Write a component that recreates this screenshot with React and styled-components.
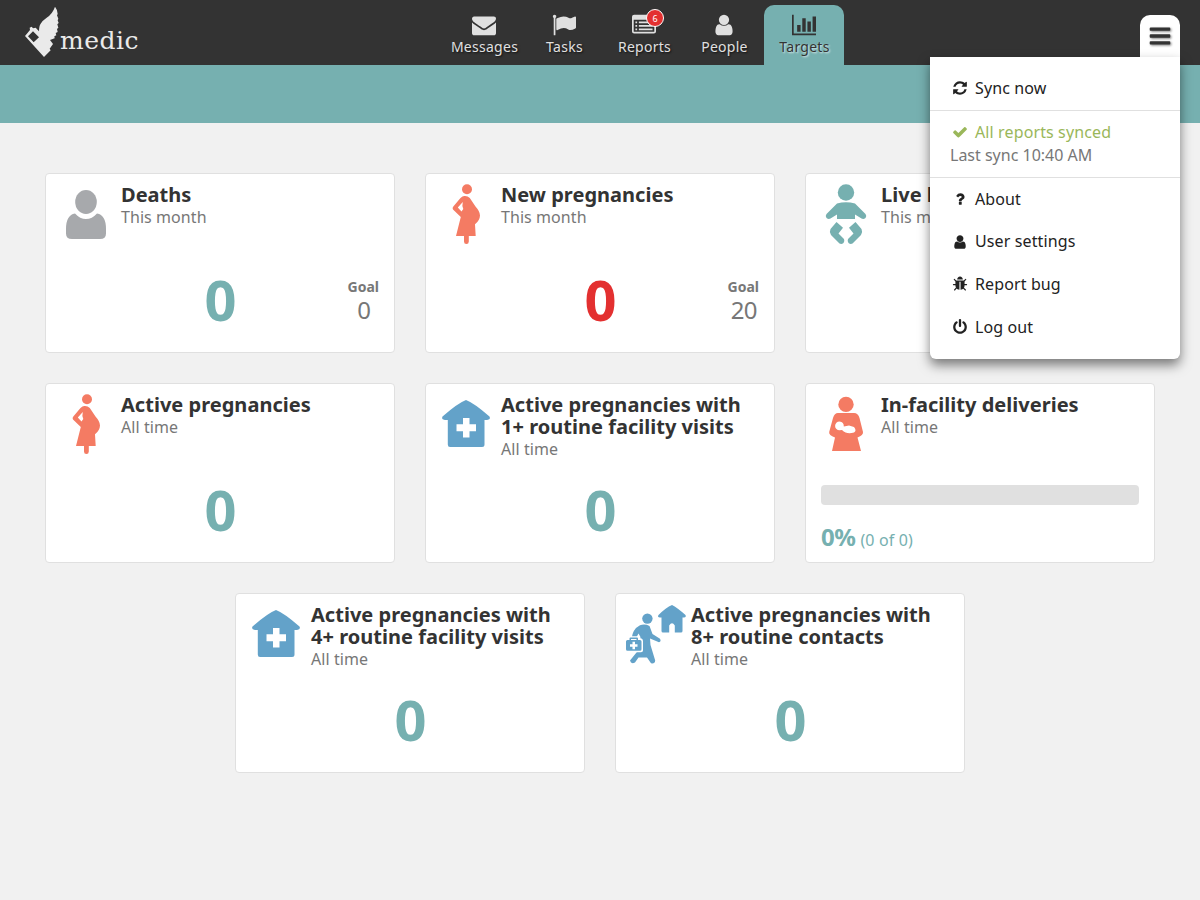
import React from 'react';
import styled, { createGlobalStyle, css } from 'styled-components';

const teal = '#76b0b0';
const red = '#e33030';

const GlobalStyle = createGlobalStyle`
  * { box-sizing: border-box; }
  body {
    margin: 0;
    background: #f1f1f1;
    color: #333;
    font-family: 'Noto Sans', sans-serif;
    font-size: 16px;
  }
`;

const Page = styled.div`
  position: relative;
  height: 900px;
  overflow: hidden;
`;

const Header = styled.header`
  display: flex;
  height: 65px;
  padding: 0 20px 0 24px;
  background: #333;
`;

const Brand = styled.div`
  display: flex;
  width: 420px;
  padding-top: 6px;
  color: #eaeaea;
`;

const BrandMark = styled.svg`
  width: 36px;
  height: 52px;
  flex: none;
  fill: currentColor;
`;

const BrandName = styled.span`
  font: 25px/30px 'DejaVu Serif', serif;
  letter-spacing: 0.5px;
  padding-top: 20px;
`;

const Nav = styled.nav`
  display: flex;
  align-items: flex-end;
`;

const Tab = styled.a`
  display: flex;
  flex-direction: column;
  align-items: center;
  width: 80px;
  height: 60px;
  padding-top: 8px;
  border-radius: 10px 10px 0 0;
  font-size: 14px;
  line-height: 20px;
  color: #e0e0e0;
  text-shadow: 1px 1px 2px rgba(0, 0, 0, 0.7);
  ${(p) => p.$active && css`
    background: ${teal};
    color: #333;
    text-shadow: 1px 1px 2px rgba(255, 255, 255, 0.8);
  `}
`;

const TabLabel = styled.span`
  padding-left: 1px;
  letter-spacing: 0.27px;
`;

const TabIcon = styled.span`
  position: relative;
  display: block;
  height: 24px;
`;

const Badge = styled.span`
  position: absolute;
  top: -4px;
  left: 14px;
  width: 18px;
  height: 18px;
  border: 1px solid #fff;
  border-radius: 50%;
  background: ${red};
  color: #fff;
  font-size: 9px;
  line-height: 17px;
  text-align: center;
  text-shadow: none;
`;

const Glyph = styled.svg`
  display: block;
  flex: none;
  width: ${(p) => p.$size}px;
  height: ${(p) => p.$size}px;
  fill: currentColor;
  overflow: hidden;
`;

const MenuButton = styled.button`
  display: flex;
  justify-content: center;
  width: 40px;
  height: 50px;
  margin: 15px 0 0 auto;
  padding: 8.500px 0 0;
  border: 0;
  border-radius: 10px 10px 0 0;
  background: #fff;
  color: #333;
  svg { filter: drop-shadow(1px 1px 1px rgba(0, 0, 0, 0.5)); }
`;

const Strip = styled.div`
  height: 58px;
  background: ${teal};
`;

const Menu = styled.div`
  position: absolute;
  top: 57px;
  right: 20px;
  width: 250px;
  padding: 10px 0;
  border-radius: 0 0 6px 6px;
  background: #fff;
  box-shadow: 0 6px 12px rgba(0, 0, 0, 0.5);
  line-height: 22.85px;
  color: #222;
`;

const MenuSection = styled.div`
  & + & { border-top: 1px solid #e0e0e0; }
`;

const MenuItem = styled.div`
  padding: 10px 20px;
`;

const MenuLine = styled.div`
  display: flex;
  align-items: center;
  gap: 7px;
  padding-left: 2px;
  letter-spacing: 0.12px;
  color: ${(p) => (p.$ok ? '#9ab75a' : 'inherit')};
  svg { margin-top: -0.5px; }
`;

const LastSync = styled.div`
  color: #777;
`;

const Cards = styled.main`
  display: flex;
  flex-wrap: wrap;
  justify-content: center;
  gap: 30px;
  padding: 50px 45px;
`;

const Card = styled.section`
  width: 350px;
  height: 180px;
  padding: 10px;
  border: 1px solid #e0e0e0;
  border-radius: 4px;
  background: #fff;
`;

const CardHead = styled.div`
  display: flex;
  gap: 5px;
  height: 80px;
`;

const CardIcon = styled.svg`
  flex: none;
  width: 60px;
  height: 60px;
  overflow: visible;
  fill: ${(p) => p.$color};
`;

const Title = styled.h2`
  margin: 0;
  font-size: 20px;
  line-height: 22px;
  font-weight: 700;
  letter-spacing: 0.02px;
  white-space: pre-line;
`;

const Period = styled.p`
  margin: 0;
  line-height: 22px;
  letter-spacing: 0.07px;
  color: #777;
`;

const Result = styled.div`
  display: grid;
  grid-template-columns: 1fr auto 1fr;
  align-items: center;
  height: 70px;
  padding: 0 5px;
`;

const Count = styled.span`
  grid-column: 2;
  padding-left: 1px;
  font-size: 56px;
  line-height: 70px;
  font-weight: 700;
  color: ${(p) => (p.$missed ? red : teal)};
`;

const Goal = styled.div`
  justify-self: end;
  padding-top: 2px;
  text-align: center;
  color: #777;
`;

const GoalLabel = styled.div`
  font-size: 14px;
  line-height: 20px;
  font-weight: 700;
`;

const GoalValue = styled.div`
  font-size: 24px;
  line-height: 26px;
  padding-left: 1px;
  letter-spacing: -0.8px;
`;

const Progress = styled.div`
  padding: 11px 5px 0;
`;

const Track = styled.div`
  height: 20px;
  border-radius: 4px;
  background: #e0e0e0;
`;

const Percent = styled.div`
  padding-top: 15px;
  line-height: 34px;
  letter-spacing: 0.15px;
  color: ${teal};
  strong {
    margin-right: 5px;
    font-size: 24px;
    letter-spacing: -0.5px;
  }
`;

const userPath = 'M1536 1399q0 109-62.5 187t-150.5 78h-854q-88 0-150.5-78t-62.5-187q0-85 8.5-160.5t31.5-152 58.5-131 94-89 134.5-34.5q131 128 313 128t313-128q76 0 134.5 34.5t94 89 58.5 131 31.5 152 8.5 160.5zm-256-887q0 159-112.5 271.5t-271.5 112.5-271.5-112.5-112.5-271.5 112.5-271.5 271.5-112.5 271.5 112.5 112.5 271.5z';

const glyphs = {
  envelope: 'M1792 710v794q0 66-47 113t-113 47h-1472q-66 0-113-47t-47-113v-794q44 49 101 87 362 246 497 345 57 42 92.5 65.5t94.5 48 110 24.5h2q51 0 110-24.5t94.5-48 92.5-65.5q170-123 498-345 57-39 100-87zm0-294q0 79-49 151t-122 123q-376 261-468 325-10 7-42.5 31t-54 38.5-52 32.5-57.5 27-50 9h-2q-23 0-50-9t-57.5-27-52-32.5-54-38.5-42.5-31q-91-64-262-182.5t-205-142.5q-62-42-117-115.5t-55-136.5q0-78 41.5-130t118.5-52h1472q65 0 112.5 47t47.5 113z',
  flag: 'M320 256q0 72-64 110v1266q0 13-9.5 22.5t-22.5 9.5h-64q-13 0-22.5-9.5t-9.5-22.5v-1266q-64-38-64-110 0-53 37.5-90.5t90.5-37.5 90.5 37.5 37.5 90.5zm1472 64v763q0 25-12.5 38.5t-39.5 27.5q-215 116-369 116-61 0-123.5-22t-108.5-48-115.5-48-142.5-22q-192 0-464 146-17 9-33 9-26 0-45-19t-19-45v-742q0-32 31-55 21-14 79-43 236-120 421-120 107 0 200 29t219 88q38 19 88 19 54 0 117.5-21t110-47 88-47 54.5-21q26 0 45 19t19 45z',
  list: 'M160 128h1472q160 0 160 160v1088q0 160-160 160h-1472q-160 0-160-160v-1088q0-160 160-160zM128 512v864q0 32 32 32h1472q32 0 32-32v-864zM256 640h128v128h-128zM512 640h1024v128h-1024zM256 896h128v128h-128zM512 896h1024v128h-1024zM256 1152h128v128h-128zM512 1152h1024v128h-1024z',
  user: userPath,
  chart: 'M640 896v512h-256v-512h256zm384-512v1024h-256v-1024h256zm1024 1152v128h-2048v-1536h128v1408h1920zm-640-896v768h-256v-768h256zm384-384v1152h-256v-1152h256z',
  bars: 'M1664 1344v128q0 26-19 45t-45 19h-1408q-26 0-45-19t-19-45v-128q0-26 19-45t45-19h1408q26 0 45 19t19 45zm0-512v128q0 26-19 45t-45 19h-1408q-26 0-45-19t-19-45v-128q0-26 19-45t45-19h1408q26 0 45 19t19 45zm0-512v128q0 26-19 45t-45 19h-1408q-26 0-45-19t-19-45v-128q0-26 19-45t45-19h1408q26 0 45 19t19 45z',
  refresh: 'M1639 1056q0 5-1 7-64 268-268 434.5t-478 166.5q-146 0-282.5-55t-243.5-157l-129 129q-19 19-45 19t-45-19-19-45v-448q0-26 19-45t45-19h448q26 0 45 19t19 45-19 45l-137 137q71 66 161 102t187 36q134 0 250-65t186-179q11-17 53-117 8-23 30-23h192q13 0 22.5 9.5t9.5 22.5zm25-800v448q0 26-19 45t-45 19h-448q-26 0-45-19t-19-45 19-45l138-138q-148-137-349-137-134 0-250 65t-186 179q-11 17-53 117-8 23-30 23h-199q-13 0-22.5-9.5t-9.5-22.5v-7q65-268 270-434.5t480-166.5q146 0 284 55.5t245 156.5l130-129q19-19 45-19t45 19 19 45z',
  check: 'M1671 566q0 40-28 68l-724 724-136 136q-28 28-68 28t-68-28l-136-136-362-362q-28-28-28-68t28-68l136-136q28-28 68-28t68 28l294 295 656-657q28-28 68-28t68 28l136 136q28 28 28 68z',
  question: 'M1088 1256v240q0 16-12 28t-28 12h-240q-16 0-28-12t-12-28v-240q0-16 12-28t28-12h240q16 0 28 12t12 28zm316-600q0 54-15.5 101t-35 76.5-55 59.5-57.5 43.5-61 35.5q-41 23-68.5 65t-27.5 67q0 17-12 32.5t-28 15.5h-240q-15 0-25.5-18.5t-10.5-37.5v-45q0-83 65-156.5t143-108.5q59-27 84-56t25-76q0-42-46.5-74t-107.5-32q-65 0-108 29-35 25-107 115-13 16-31 16-12 0-25-8l-164-125q-13-10-15.5-25t5.5-28q160-266 464-266 80 0 161 31t146 83 106 127.5 41 158.5z',
  bug: 'M1696 960q0 26-19 45t-45 19h-224q0 171-67 290l208 209q19 19 19 45t-19 45q-18 19-45 19t-45-19l-198-197q-5 5-15 13t-42 28.5-65 36.5-82 29-97 13v-896h-128v896q-51 0-101.5-13.5t-87-33-66-39-43.5-32.5l-15-14-183 207q-20 21-48 21-24 0-43-16-19-18-20.5-44.5t15.5-46.5l202-227q-58-114-58-274h-224q-26 0-45-19t-19-45 19-45 45-19h224v-294l-173-173q-19-19-19-45t19-45 45-19 45 19l173 173h844l173-173q19-19 45-19t45 19 19 45-19 45l-173 173v294h224q26 0 45 19t19 45zm-480-576h-640q0-133 93.5-226.5t226.5-93.5 226.5 93.5 93.5 226.5z',
  power: 'M1664 896q0 156-61 298t-164 245-245 164-298 61-298-61-245-164-164-245-61-298q0-182 80.5-343t226.5-270q43-32 95.5-25t83.5 50q32 42 24.5 94.5t-49.5 84.5q-98 74-151.5 181t-53.5 228q0 104 40.5 198.5t109.5 163.5 163.5 109.5 198.5 40.5 198.5-40.5 163.5-109.5 109.5-163.5 40.5-198.5q0-121-53.5-228t-151.5-181q-42-32-49.5-84.5t24.5-94.5q31-43 84-50t95 25q146 109 226.5 270t80.5 343zm-640-768v640q0 52-38 90t-90 38-90-38-38-90v-640q0-52 38-90t90-38 90 38 38 90z',
};

const Icon = ({ name, size = 16 }) => (
  <Glyph viewBox="0 0 1792 1792" $size={size} aria-hidden="true">
    <path fillRule="evenodd" d={glyphs[name]} />
  </Glyph>
);

const pictures = {
  person: {
    color: '#a7a9ac',
    art: (
      <>
        <ellipse cx="30" cy="18" rx="10.800" ry="11.900" />
        <path d="M19 29.500Q24 35 30 35T41 29.500Q50 31 50 45V49.500Q50 55 44 55H16Q10 55 10 49.500V45Q10 31 19 29.500Z" />
      </>
    ),
  },
  pregnant: {
    color: '#f47b63',
    art: (
      <>
        <circle cx="31" cy="5.300" r="5" />
        <path fillRule="evenodd" d="M28.300 12Q31.500 11.700 33.800 14L39.500 22.500Q44 27.500 44 31.500Q43.800 36.500 39 40.300L39.700 52H32.800V57.500Q32.800 60 30.400 60T28 57.500V52H20L24.800 33L17 25.500Q16 24 17.300 22.500L24.500 14Q26.500 12 28.300 12ZM26.800 18L21.800 23.500L25.500 27.500L27.300 25Q25.800 21.500 26.800 18Z" />
      </>
    ),
  },
  baby: {
    color: teal,
    art: (
      <>
        <circle cx="30" cy="8.500" r="8.200" />
        <path d="M21 19.500Q30 17 39 19.500L49.500 30Q51 32 49.500 34Q47.500 35.500 45.500 34.500L39 30.500V35H21V30.500L14.500 34.500Q12.500 35.500 10.500 34Q9 32 10.500 30Z" />
        <path d="M20.500 38L27 43.800L22.500 49.500L28 55Q29 57.500 27.500 59Q25.500 60.500 23.500 59.500L15 51Q13 48 14.500 45Z" />
        <path d="M39.500 38L33 43.800L37.500 49.500L32 55Q31 57.500 32.500 59Q34.500 60.500 36.500 59.500L45 51Q47 48 45.500 45Z" />
      </>
    ),
  },
  clinic: {
    color: '#63a2c9',
    art: (
      <path fillRule="evenodd" d="M30 6Q38 9 53.500 22.500Q55 25.500 51 26H48.500V50.500Q48.500 53 46 53H14Q11.800 53 11.800 50.500V26H9Q5 25.500 6.500 22.500Q22 9 30 6ZM27 24V30.300H20.500V37.300H27V43.500H33.500V37.300H40V30.300H33.500V24Z" />
    ),
  },
  delivery: {
    color: '#f47b63',
    art: (
      <>
        <circle cx="30" cy="10.400" r="7.700" />
        <path fillRule="evenodd" d="M22 19H38Q42 19 43.500 24L47 38Q47.500 41 41.500 43.500L45 57H16L19 43.500Q12.500 41 13.200 38L17 24Q18.500 19 22 19ZM23.500 27.500A4.400 4.400 0 0 0 23.500 36.300L26 36Q31 41 38 38.500Q41 36.500 38 33L33 31.500L27.800 32.500Q28 28 23.500 27.500Z" />
      </>
    ),
  },
  visit: {
    color: '#63a2c9',
    art: (
      <>
        <circle cx="21.400" cy="14.600" r="5.200" />
        <path d="M14 21.200Q19 19.500 23.500 22L26.500 30L34 34.800Q35.500 37.500 33 38.300L24 34.500L24.500 41L29.200 56.500Q29 60 25 59.300L21 53.500H12.500L9 58.500Q5 60.500 4 56.500L12.500 46L14.500 33L12.500 29.500L9.500 35H5.500Q6.500 25 14 21.200Z" />
        <path fill="#fff" d="M2.500 34.300L4 32.300H12.500L14 34.300H15Q17 35 17 37V46.500Q17 48.300 15 48.300H-1V34.300Z" />
        <path fillRule="evenodd" d="M3.500 36V34.500Q3.500 33.500 4.500 33.500H11Q12 33.500 12 34.500V36H14Q15.500 36 15.500 37.500V45.200Q15.500 46.700 14 46.700H1.500Q0 46.700 0 45.200V37.500Q0 36 1.500 36ZM5 36H10.500V35H5ZM6.500 37.800V40.200H4V42.700H6.500V45.200H9V42.700H11.500V40.200H9V37.800Z" />
        <path d="M46 1Q51 3.500 59.500 11Q60.500 13 58 13.500H56.500V27Q56.500 28.500 55 28.500H48.800V21.500Q46 17 43.200 21.500V28.500H37Q35.500 28.500 35.500 27V13.500H34Q31 13 32.500 11Q40 3.500 46 1Z" />
      </>
    ),
  },
};

const tabs = [
  { label: 'Messages', icon: 'envelope' },
  { label: 'Tasks', icon: 'flag' },
  { label: 'Reports', icon: 'list', badge: 6 },
  { label: 'People', icon: 'user' },
  { label: 'Targets', icon: 'chart', active: true },
];

const actions = [
  ['question', 'About'],
  ['user', 'User settings'],
  ['bug', 'Report bug'],
  ['power', 'Log out'],
];

const targets = [
  { title: 'Deaths', period: 'This month', icon: 'person', count: 0, goal: 0 },
  { title: 'New pregnancies', period: 'This month', icon: 'pregnant', count: 0, goal: 20, missed: true },
  { title: 'Live births', period: 'This month', icon: 'baby' },
  { title: 'Active pregnancies', period: 'All time', icon: 'pregnant', count: 0 },
  { title: 'Active pregnancies with\n1+ routine facility visits', period: 'All time', icon: 'clinic', count: 0 },
  { title: 'In-facility deliveries', period: 'All time', icon: 'delivery', percent: '0%', detail: '(0 of 0)' },
  { title: 'Active pregnancies with\n4+ routine facility visits', period: 'All time', icon: 'clinic', count: 0 },
  { title: 'Active pregnancies with\n8+ routine contacts', period: 'All time', icon: 'visit', count: 0 },
];

function TargetCard({ target }) {
  const { color, art } = pictures[target.icon];
  return (
    <Card>
      <CardHead>
        <CardIcon viewBox="0 0 60 60" $color={color} aria-hidden="true">{art}</CardIcon>
        <div>
          <Title>{target.title}</Title>
          <Period>{target.period}</Period>
        </div>
      </CardHead>
      {target.percent ? (
        <Progress>
          <Track />
          <Percent><strong>{target.percent}</strong>{target.detail}</Percent>
        </Progress>
      ) : (
        <Result>
          <Count $missed={target.missed}>{target.count}</Count>
          {target.goal !== undefined && (
            <Goal>
              <GoalLabel>Goal</GoalLabel>
              <GoalValue>{target.goal}</GoalValue>
            </Goal>
          )}
        </Result>
      )}
    </Card>
  );
}

export default function App() {
  return (
    <Page>
      <GlobalStyle />
      <Header>
        <Brand>
          <BrandMark viewBox="42 18 108 156" aria-hidden="true">
            <path fillRule="evenodd" d="M135 20Q142 28 143 42L141 46L145 56L143 61L146 69L142 73L145 83L141 87L143 96L137 99L139 106L133 109L134 115L120 120L129 132L119 146L122 151L102 171L45 108L60 90L59 83L65 80L69 85L77 83L87 94Q87 78 92 71Q98 61 110 53Q128 41 135 20ZM69 94L54 109L71 127L87 112Z" />
          </BrandMark>
          <BrandName>medic</BrandName>
        </Brand>
        <Nav>
          {tabs.map((t) => (
            <Tab key={t.label} $active={t.active}>
              <TabIcon>
                <Icon name={t.icon} size={24} />
                {t.badge && <Badge>{t.badge}</Badge>}
              </TabIcon>
              <TabLabel>{t.label}</TabLabel>
            </Tab>
          ))}
        </Nav>
        <MenuButton aria-label="Menu"><Icon name="bars" size={24} /></MenuButton>
      </Header>
      <Strip />
      <Cards>
        {targets.map((t) => <TargetCard key={t.title} target={t} />)}
      </Cards>
      <Menu>
        <MenuSection>
          <MenuItem><MenuLine><Icon name="refresh" />Sync now</MenuLine></MenuItem>
        </MenuSection>
        <MenuSection>
          <MenuItem>
            <MenuLine $ok><Icon name="check" />All reports synced</MenuLine>
            <LastSync>Last sync 10:40 AM</LastSync>
          </MenuItem>
        </MenuSection>
        <MenuSection>
          {actions.map(([icon, label]) => (
            <MenuItem key={label}><MenuLine><Icon name={icon} />{label}</MenuLine></MenuItem>
          ))}
        </MenuSection>
      </Menu>
    </Page>
  );
}
